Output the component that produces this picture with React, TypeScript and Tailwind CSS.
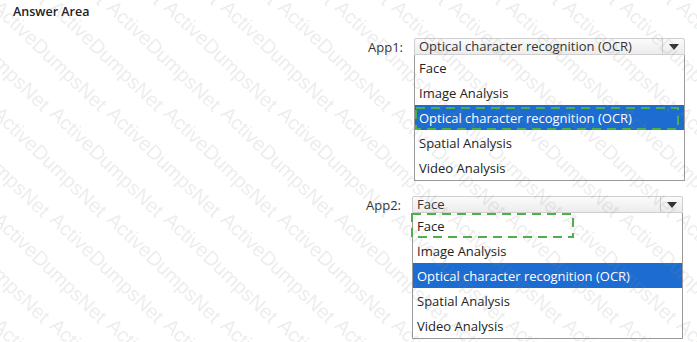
import React from "react";

const options = [
  "Face",
  "Image Analysis",
  "Optical character recognition (OCR)",
  "Spatial Analysis",
  "Video Analysis",
];

function Dropdown({
  label,
  value,
  offset,
  dash,
}: {
  label: string;
  value: string;
  offset: string;
  dash: { left: number; top: number; w: number; h: number };
}) {
  return (
    <div className={`flex ${offset}`}>
      <div className="w-[46px] pt-[1px] text-[13px] leading-[16px] text-[#333]">{label}</div>
      <div className="relative flex w-[271px] flex-col">
        <div className="flex h-[17px] rounded-t-[2px] border border-[#cfcfcf] bg-gradient-to-b from-[#fbfbfb] to-[#ececec]">
          <div className="flex-1 pl-[4px] text-[13px] leading-[15px] text-[#333]">{value}</div>
          <div className="flex w-[22px] items-center justify-center border-l border-[#cfcfcf]">
            <svg width="10" height="6" viewBox="0 0 10 6">
              <path d="M0 0 L10 0 L5 6 Z" fill="#333" />
            </svg>
          </div>
        </div>
        <div className="flex flex-col border border-t-0 border-[#9a9a9a] bg-white">
          {options.map((o) => (
            <div
              key={o}
              className={`h-[25px] pl-[4px] text-[13px] leading-[26px] ${
                o === "Optical character recognition (OCR)" ? "bg-[#1c6cd2] text-white" : "text-[#222]"
              }`}
            >
              {o}
            </div>
          ))}
        </div>
        <svg
          className="pointer-events-none absolute"
          style={{ left: dash.left, top: dash.top }}
          width={dash.w}
          height={dash.h}
        >
          <rect
            x="1"
            y="1"
            width={dash.w - 2}
            height={dash.h - 2}
            fill="none"
            stroke="#4cb04c"
            strokeWidth="2"
            strokeDasharray="9 6"
          />
        </svg>
      </div>
    </div>
  );
}

export default function App() {
  const marks: { x: number; y: number }[] = [];
  for (let r = -1; r < 4; r++) {
    for (let c = -3; c < 13; c++) {
      marks.push({ x: 4 + 57 * c, y: -4 + 106 * r });
    }
  }
  return (
    <div
      className="relative h-[342px] w-[697px] overflow-hidden bg-white"
      style={{ fontFamily: '"Open Sans", "Noto Sans", sans-serif' }}
    >
      <div className="flex flex-col">
        <div className="pl-[13px] pt-[4px] text-[12.5px] font-semibold leading-[16px] text-[#222]">Answer Area</div>
        <Dropdown
          label="App1:"
          value="Optical character recognition (OCR)"
          offset="ml-[368px] mt-[18px]"
          dash={{ left: 1, top: 69, w: 264, h: 23 }}
        />
        <Dropdown
          label="App2:"
          value="Face"
          offset="ml-[366px] mt-[15px]"
          dash={{ left: -1, top: 17, w: 163, h: 25 }}
        />
      </div>
      <div className="pointer-events-none absolute inset-0">
        {marks.map((m, i) => (
          <span
            key={i}
            className="absolute origin-top-left whitespace-nowrap text-[20px] leading-[22px] text-[rgba(140,140,140,0.17)]"
            style={{ left: m.x, top: m.y, transform: "rotate(44deg)", fontFamily: '"Liberation Sans", sans-serif' }}
          >
            ActiveDumpsNet
          </span>
        ))}
      </div>
    </div>
  );
}
